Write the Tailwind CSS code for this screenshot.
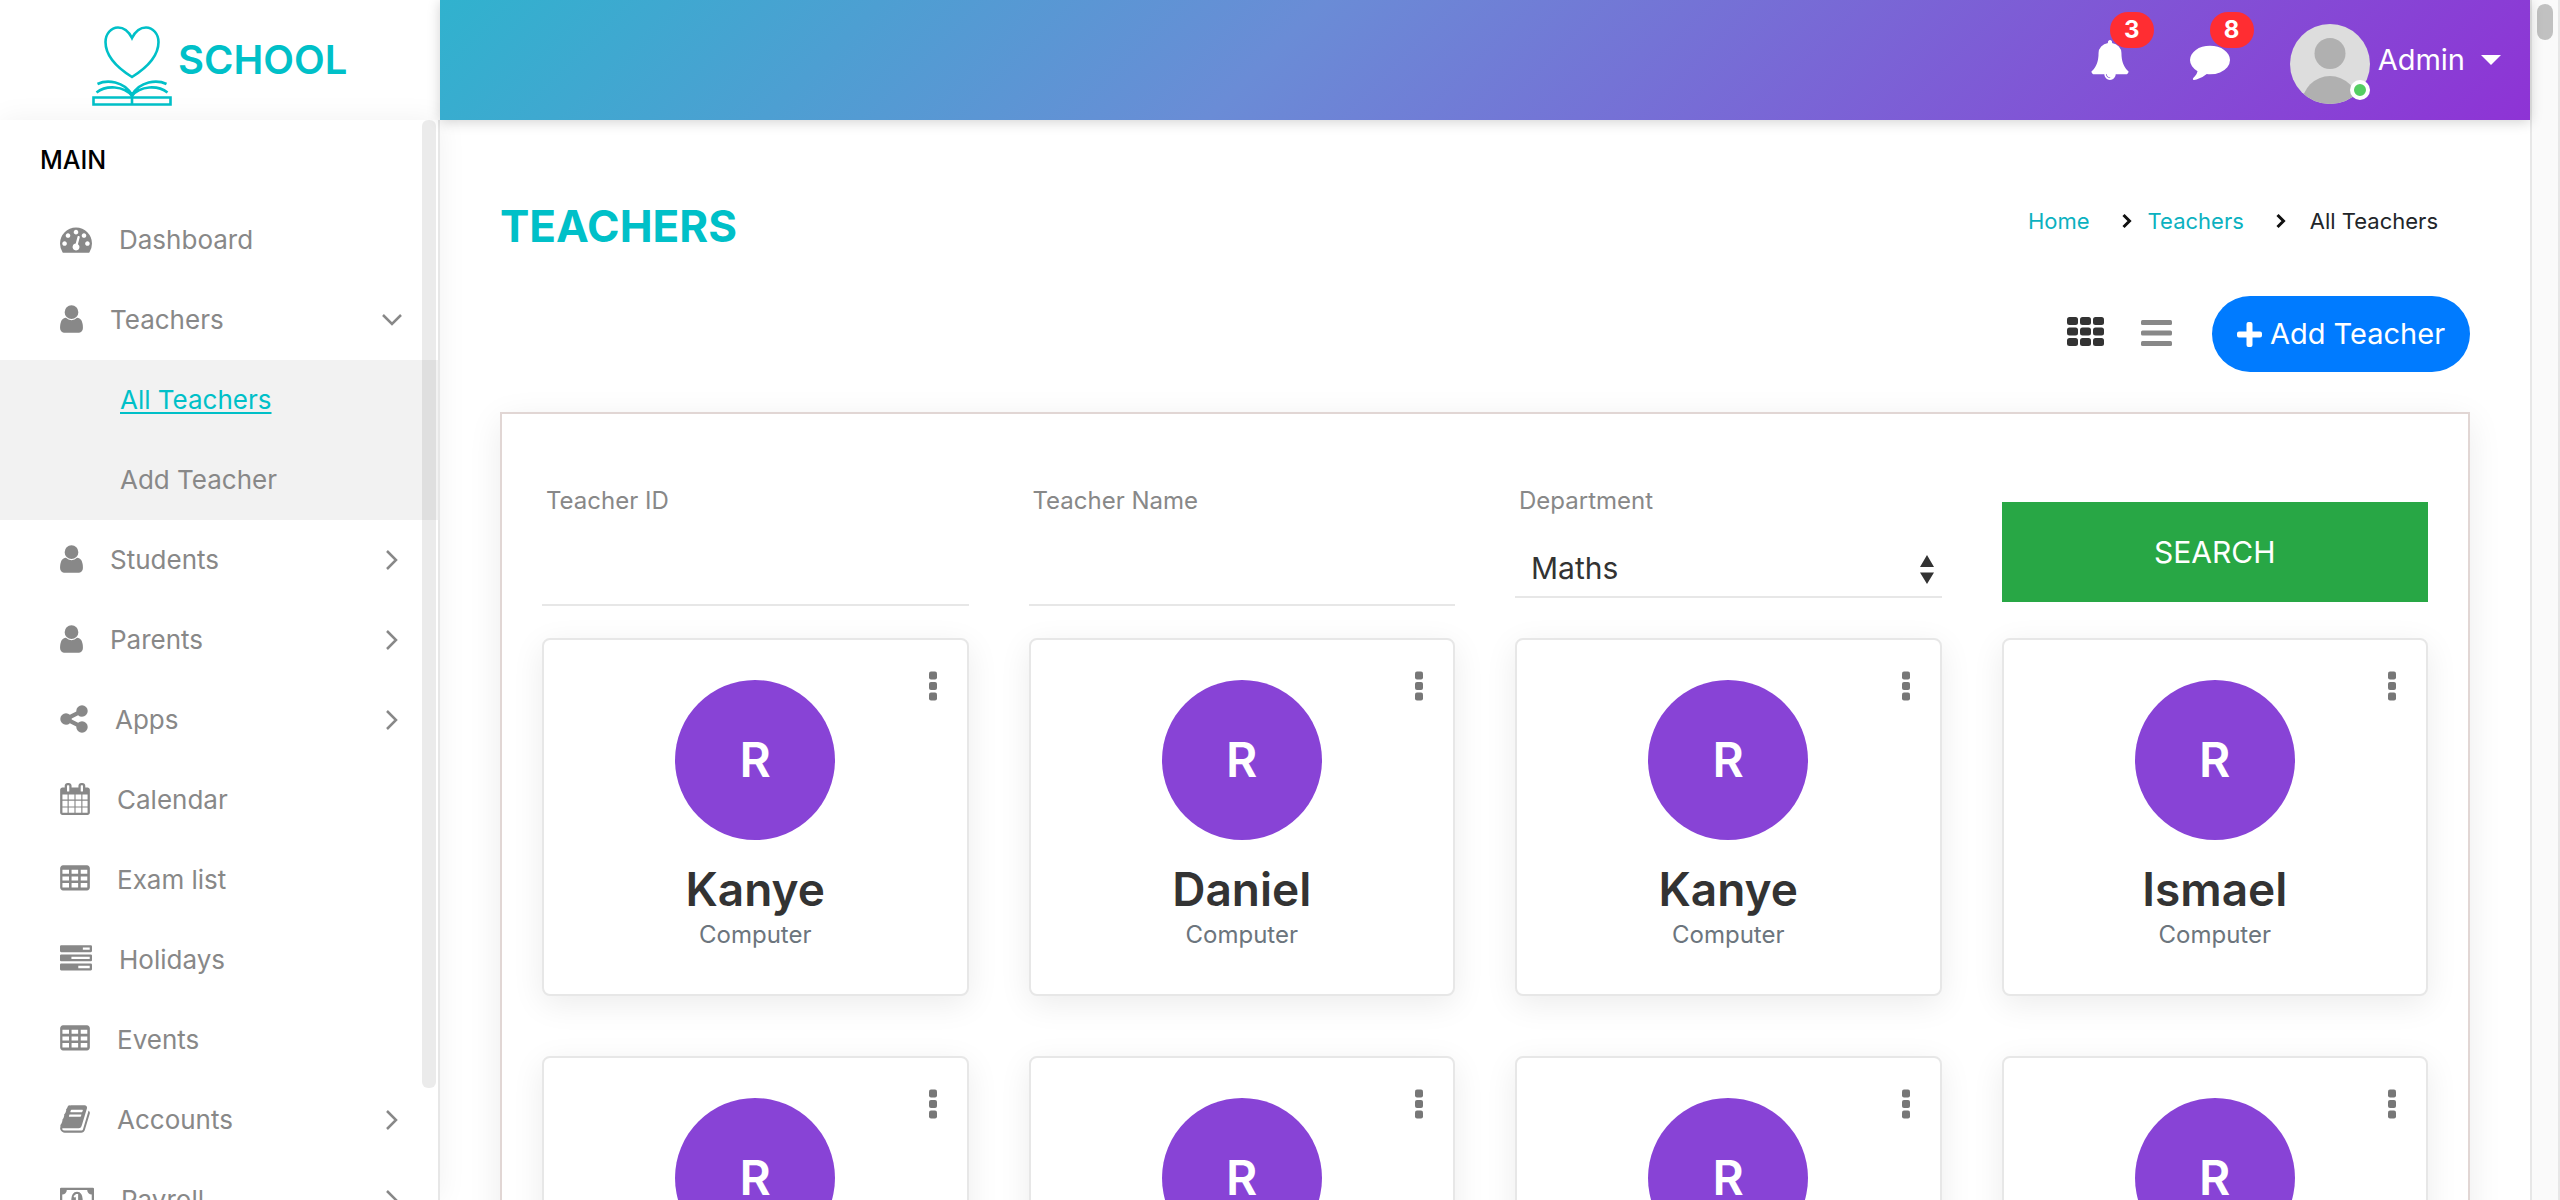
<!DOCTYPE html>
<html lang="en">
<head>
<meta charset="utf-8">
<meta name="viewport" content="width=device-width, initial-scale=1">
<title>All Teachers</title>
<script src="https://cdn.jsdelivr.net/npm/@tailwindcss/browser@4"></script>
</head>
<body class="flex h-screen overflow-hidden bg-white font-[Inter,sans-serif] text-[#333333]">

<!-- Icon sprite -->
<svg class="hidden" aria-hidden="true">
  <symbol id="i-dash" viewBox="0 0 1792 1792"><path d="M384 1152q0-53-37.5-90.5t-90.5-37.5-90.5 37.5-37.5 90.5 37.5 90.5 90.5 37.5 90.5-37.5 37.5-90.5zm192-448q0-53-37.5-90.5t-90.5-37.5-90.5 37.5-37.5 90.5 37.5 90.5 90.5 37.5 90.5-37.5 37.5-90.5zm428 481l101-382q6-26-7.5-48.5t-38.5-29.5-48 6.5-30 39.5l-101 382q-60 5-107 43.5t-63 98.5q-20 77 20 146t117 89 146-20 89-117q16-60-6-117t-72-91zm660-33q0-53-37.5-90.5t-90.5-37.5-90.5 37.5-37.5 90.5 37.5 90.5 90.5 37.5 90.5-37.5 37.5-90.5zm-640-640q0-53-37.5-90.5t-90.5-37.5-90.5 37.5-37.5 90.5 37.5 90.5 90.5 37.5 90.5-37.5 37.5-90.5zm448 192q0-53-37.5-90.5t-90.5-37.5-90.5 37.5-37.5 90.5 37.5 90.5 90.5 37.5 90.5-37.5 37.5-90.5zm320 448q0 261-141 483-19 29-54 29h-1402q-35 0-54-29-141-221-141-483 0-182 71-348t191-286 286-191 348-71 348 71 286 191 191 286 71 348z"/></symbol>
  <symbol id="i-user" viewBox="256 0 1280 1792"><path d="M1536 1399q0 109-62.5 187t-150.5 78h-854q-88 0-150.5-78t-62.5-187q0-85 8.5-160.5t31.5-152 58.5-131 94-89 134.5-34.5q131 128 313 128t313-128q76 0 134.5 34.5t94 89 58.5 131 31.5 152 8.5 160.5zm-256-887q0 159-112.5 271.5t-271.5 112.5-271.5-112.5-112.5-271.5 112.5-271.5 271.5-112.5 271.5 112.5 112.5 271.5z"/></symbol>
  <symbol id="i-share" viewBox="128 0 1536 1792"><path d="M1344 1024q133 0 226.5 93.5t93.5 226.5-93.5 226.5-226.5 93.5-226.5-93.5-93.5-226.5q0-12 2-34l-360-180q-92 86-218 86-133 0-226.5-93.5t-93.5-226.5 93.5-226.5 226.5-93.5q126 0 218 86l360-180q-2-22-2-34 0-133 93.5-226.5t226.5-93.5 226.5 93.5 93.5 226.5-93.5 226.5-226.5 93.5q-126 0-218-86l-360 180q2 22 2 34t-2 34l360 180q92-86 218-86z"/></symbol>
  <symbol id="i-cal" viewBox="64 0 1664 1792"><path d="M192 1664h288v-288h-288v288zm352 0h320v-288h-320v288zm-352-352h288v-320h-288v320zm352 0h320v-320h-320v320zm-352-384h288v-288h-288v288zm736 736h320v-288h-320v288zm-384-736h320v-288h-320v288zm768 736h288v-288h-288v288zm-384-352h320v-320h-320v320zm-352-864v-288q0-13-9.5-22.5t-22.5-9.5h-64q-13 0-22.5 9.5t-9.5 22.5v288q0 13 9.5 22.5t22.5 9.5h64q13 0 22.5-9.5t9.5-22.5zm736 864h288v-320h-288v320zm-384-384h320v-288h-320v288zm384 0h288v-288h-288v288zm32-480v-288q0-13-9.5-22.5t-22.5-9.5h-64q-13 0-22.5 9.5t-9.5 22.5v288q0 13 9.5 22.5t22.5 9.5h64q13 0 22.5-9.5t9.5-22.5zm384-64v1280q0 52-38 90t-90 38h-1408q-52 0-90-38t-38-90v-1280q0-52 38-90t90-38h128v-96q0-66 47-113t113-47h64q66 0 113 47t47 113v96h384v-96q0-66 47-113t113-47h64q66 0 113 47t47 113v96h128q52 0 90 38t38 90z"/></symbol>
  <symbol id="i-table" viewBox="64 0 1664 1792"><path fill-rule="evenodd" d="M224 128h1344q66 0 113 47t47 113v1088q0 66-47 113t-113 47h-1344q-66 0-113-47t-47-113v-1088q0-66 47-113t113-47zM192 384v224h368v-224zM704 384v224h368v-224zM1216 384v224h368v-224zM192 752v224h368v-224zM704 752v224h368v-224zM1216 752v224h368v-224zM192 1120v256h368v-256zM704 1120v256h368v-256zM1216 1120v256h368v-256z"/></symbol>
  <symbol id="i-tasks" viewBox="0 0 1792 1792"><path fill-rule="evenodd" d="M64 128h1664q64 0 64 64v256q0 64-64 64h-1664q-64 0-64-64v-256q0-64 64-64zM1280 256v128h384v-128zM64 640h1664q64 0 64 64v256q0 64-64 64h-1664q-64 0-64-64v-256q0-64 64-64zM640 768v128h1024v-128zM64 1152h1664q64 0 64 64v256q0 64-64 64h-1664q-64 0-64-64v-256q0-64 64-64zM1024 1280v128h640v-128z"/></symbol>
  <symbol id="i-book" viewBox="64 0 1664 1792"><path d="M1703 478q40 57 18 129l-275 906q-19 64-76.5 107.5t-122.5 43.5h-923q-77 0-148.5-53.5t-99.5-131.5q-24-67-2-127 0-4 3-27t4-37q1-8-3-21.5t-3-19.5q2-11 8-21t16.5-23.5 16.5-23.5q23-38 45-91.5t30-91.5q3-10 .5-30t-.5-28q3-11 17-28t17-23q21-36 42-92t25-90q1-9-2.5-32t.5-28q4-13 22-30.5t22-22.5q19-26 42.5-84.5t27.5-96.5q1-8-3-25.5t-2-26.5q2-8 9-18t18-23 17-21q8-12 16.5-30.5t15-35 16-36 19.5-32 26.5-23.5 36-11.5 47.5 5.5l-1 3q38-9 51-9h761q74 0 114 56t18 130l-274 906q-36 119-71.5 153.5t-128.5 34.5h-869q-27 0-38 15-11 16-1 43 24 70 144 70h923q29 0 56-15.5t35-41.5l300-987q7-22 5-57 38 15 59 43zm-1064 2q-4 13 2 22.5t20 9.5h608q13 0 25.5-9.5t16.5-22.5l21-64q4-13-2-22.5t-20-9.5h-608q-13 0-25.5 9.5t-16.5 22.5zm-83 256q-4 13 2 22.5t20 9.5h608q13 0 25.5-9.5t16.5-22.5l21-64q4-13-2-22.5t-20-9.5h-608q-13 0-25.5 9.5t-16.5 22.5z"/></symbol>
  <symbol id="i-money" viewBox="0 0 1920 1792"><path fill-rule="evenodd" d="M64 256h1792q64 0 64 64v1152q0 64-64 64h-1792q-64 0-64-64v-1152q0-64 64-64zM384 384q0 106-75 181t-181 75v512q106 0 181 75t75 181h1152q0-106 75-181t181-75v-512q-106 0-181-75t-75-181zM960 480q160 0 240 128t80 288-80 288-240 128-240-128-80-288 80-288 240-128zM768 1152h384v-96h-128v-448h-114l-148 137 77 80q42-37 55-57h2v288h-128z"/></symbol>
  <symbol id="i-right" viewBox="0 0 20 24"><path d="M5 3l9 9-9 9" fill="none" stroke="currentColor" stroke-width="2.5"/></symbol>
  <symbol id="i-down" viewBox="0 0 20 24"><path d="M1 7l9 9 9-9" fill="none" stroke="currentColor" stroke-width="2.5"/></symbol>
</svg>

<!-- Left column -->
<aside class="flex w-[440px] shrink-0 flex-col">
  <a href="#" class="flex h-[120px] shrink-0 items-center gap-[6px] pl-[92px] text-[#00c0c8]">
    <svg class="mt-3 h-20 w-20" viewBox="0 0 80 80" fill="none" stroke="currentColor" stroke-width="2.6" aria-hidden="true">
      <path d="M40 12C36 4 31 1.500 26 1.500 19 1.500 13.500 8 13.500 16 13.500 30 24 41 40 51 56 41 66.500 30 66.500 16 66.500 8 61 1.500 54 1.500 49 1.500 44 4 40 12Z"/>
      <path d="M5.500 58C15 53.500 32 55 40 69 48 55 65 53.500 74.500 58M4.500 66.500C14 59 32 59.500 40 70 48 59.500 66 59 75.500 66.500"/>
      <path d="M1.500 71.500h77v7h-77zM40 66v12"/>
    </svg>
    <span class="text-[40px] font-semibold leading-[48px]">SCHOOL</span>
  </a>
  <nav class="relative z-10 min-h-0 flex-1 border-r-2 border-[#e7e7e7] bg-white shadow-[0_0_28px_rgba(0,0,0,0.06)]">
    <div class="h-full overflow-hidden text-[26px] leading-[80px] text-[#888888]">
      <h2 class="pl-10 text-[25px] font-medium text-black">MAIN</h2>
      <ul>
        <li><a href="#" class="flex h-20 items-center gap-[27px] pl-[60px]"><svg class="mb-0.5 h-8 w-8 fill-current"><use href="#i-dash"/></svg>Dashboard</a></li>
        <li>
          <a href="#" class="flex h-20 items-center gap-[27px] pl-[60px] pr-9"><svg class="mb-0.5 h-8 w-[23px] fill-current"><use href="#i-user"/></svg>Teachers<svg class="ml-auto h-6 w-5"><use href="#i-down"/></svg></a>
          <ul class="bg-[#f2f2f2]">
            <li><a href="#" class="flex h-20 items-center pl-[120px] text-[#00c0c8] underline decoration-2 underline-offset-3">All Teachers</a></li>
            <li><a href="#" class="flex h-20 items-center pl-[120px]">Add Teacher</a></li>
          </ul>
        </li>
        <li><a href="#" class="flex h-20 items-center gap-[27px] pl-[60px] pr-9"><svg class="mb-0.5 h-8 w-[23px] fill-current"><use href="#i-user"/></svg>Students<svg class="ml-auto h-6 w-5"><use href="#i-right"/></svg></a></li>
        <li><a href="#" class="flex h-20 items-center gap-[27px] pl-[60px] pr-9"><svg class="mb-0.5 h-8 w-[23px] fill-current"><use href="#i-user"/></svg>Parents<svg class="ml-auto h-6 w-5"><use href="#i-right"/></svg></a></li>
        <li><a href="#" class="flex h-20 items-center gap-[27px] pl-[60px] pr-9"><svg class="mb-0.5 h-8 w-[28px] fill-current"><use href="#i-share"/></svg>Apps<svg class="ml-auto h-6 w-5"><use href="#i-right"/></svg></a></li>
        <li><a href="#" class="flex h-20 items-center gap-[27px] pl-[60px]"><svg class="mb-0.5 h-8 w-[30px] fill-current"><use href="#i-cal"/></svg>Calendar</a></li>
        <li><a href="#" class="flex h-20 items-center gap-[27px] pl-[60px]"><svg class="mb-0.5 h-8 w-[30px] fill-current"><use href="#i-table"/></svg>Exam list</a></li>
        <li><a href="#" class="flex h-20 items-center gap-[27px] pl-[60px]"><svg class="mb-0.5 h-8 w-8 fill-current"><use href="#i-tasks"/></svg>Holidays</a></li>
        <li><a href="#" class="flex h-20 items-center gap-[27px] pl-[60px]"><svg class="mb-0.5 h-8 w-[30px] fill-current"><use href="#i-table"/></svg>Events</a></li>
        <li><a href="#" class="flex h-20 items-center gap-[27px] pl-[60px] pr-9"><svg class="mb-0.5 h-8 w-[30px] fill-current"><use href="#i-book"/></svg>Accounts<svg class="ml-auto h-6 w-5"><use href="#i-right"/></svg></a></li>
        <li><a href="#" class="flex h-20 items-center gap-[27px] pl-[60px] pr-9"><svg class="mb-0.5 h-8 w-[34px] fill-current"><use href="#i-money"/></svg>Payroll<svg class="ml-auto h-6 w-5"><use href="#i-right"/></svg></a></li>
      </ul>
    </div>
    <!-- Sidebar scroll thumb -->
    <div class="absolute bottom-28 right-[2px] top-0 w-[14px] rounded-[6px] bg-black/8"></div>
  </nav>
</aside>

<!-- Right column -->
<div class="flex min-w-0 flex-1 flex-col">
  <header class="relative z-20 flex h-[120px] shrink-0 items-center justify-end bg-linear-[135deg,#30b2ce_0%,#6a8cd6_40%,#8e33d5_100%] pr-[29px] text-white shadow-[0_2px_12px_rgba(0,0,0,0.18)]">
    <button class="relative mr-[60px] h-10 w-10" aria-label="Notifications">
      <svg class="h-10 w-10 fill-current" viewBox="0 0 1792 1792"><path d="M912 1696q0-16-16-16-59 0-101.500-42.500t-42.500-101.500q0-16-16-16t-16 16q0 73 51.500 124.500t124.500 51.500q16 0 16-16zm816-288q0 52-38 90t-90 38h-448q0 106-75 181t-181 75-181-75-75-181h-448q-52 0-90-38t-38-90q50-42 91-88t85-119.500 74.500-158.500 50-206 19.500-260q0-152 117-282.500t307-158.500q-8-19-8-39 0-40 28-68t68-28 68 28 28 68q0 20-8 39 190 28 307 158.500t117 282.500q0 139 19.500 260t50 206 74.500 158.500 85 119.500 91 88z"/></svg>
      <span class="absolute -top-7 left-5 flex h-9 w-11 items-center justify-center rounded-full bg-[#ff2d32] text-[24px] font-bold leading-9">3</span>
    </button>
    <button class="relative mr-[60px] h-10 w-10" aria-label="Messages">
      <svg class="h-10 w-10 fill-current" viewBox="0 0 1792 1792"><path d="M1792 896q0 174-120 321.500t-326 233-450 85.500q-70 0-145-8-198 175-460 242-49 14-114 22-17 2-30.500-9t-17.500-29v-1q-3-4-.5-12t2-10 4.500-9.500l6-9 7-8.500 8-9q7-8 31-34.500t34.500-38 31-39.500 32.500-51 27-59 26-76q-157-89-247.500-220t-90.500-281q0-130 71-248.500t191-204.500 286-136.500 348-50.500 348 50.500 286 136.500 191 204.500 71 248.500z"/></svg>
      <span class="absolute -top-7 left-5 flex h-9 w-11 items-center justify-center rounded-full bg-[#ff2d32] text-[24px] font-bold leading-9">8</span>
    </button>
    <button class="flex items-center text-[29px]">
      <span class="relative mt-2 block h-20 w-20">
        <svg class="h-20 w-20" viewBox="0 0 80 80" aria-hidden="true">
          <clipPath id="av"><circle cx="40" cy="40" r="40"/></clipPath>
          <g clip-path="url(#av)"><path fill="#dddddd" d="M0 0h80v80H0z"/><circle cx="40" cy="29.500" r="15.500" fill="#b0b0b0"/><circle cx="40" cy="80" r="28" fill="#b0b0b0"/></g>
        </svg>
        <span class="absolute bottom-1 right-0 h-5 w-5 rounded-full border-4 border-white bg-[#55ce63]"></span>
      </span>
      <span class="pl-2">Admin</span>
      <svg class="ml-4 h-[10px] w-5 fill-current" viewBox="0 0 20 10" aria-hidden="true"><path d="M0 0h20L10 10z"/></svg>
    </button>
  </header>

  <main class="min-h-0 flex-1 overflow-hidden px-[60px] pt-[72px]">
    <div class="mb-9 flex h-[68px] items-start justify-between">
      <h1 class="text-[44px] font-bold leading-[68px] text-[#00c0c8]">TEACHERS</h1>
      <nav aria-label="Breadcrumb" class="pr-8">
        <ol class="flex items-center text-[22px] leading-[58px] text-[#212529]">
          <li><a href="#" class="text-[#0bb1c0]">Home</a></li>
          <li class="flex items-center"><svg class="ml-8 mr-4 h-4 w-[10px]" viewBox="0 0 10 16" fill="none" stroke="#111" stroke-width="3"><path d="M1.500 2l6 6-6 6"/></svg><a href="#" class="text-[#0bb1c0]">Teachers</a></li>
          <li class="flex items-center"><svg class="ml-8 mr-6 h-4 w-[10px]" viewBox="0 0 10 16" fill="none" stroke="#111" stroke-width="3"><path d="M1.500 2l6 6-6 6"/></svg>All Teachers</li>
        </ol>
      </nav>
    </div>

    <div class="mb-10 flex h-[76px] items-center justify-end">
      <button aria-label="Grid view"><svg class="mb-1 h-[30px] w-[37px] fill-[#333333]" viewBox="0 0 37 30"><rect width="11" height="8" y="0" rx="2.500"/><rect width="11" height="8" x="13" rx="2.500"/><rect width="11" height="8" x="26" rx="2.500"/><rect width="11" height="8" y="10.500" rx="2.500"/><rect width="11" height="8" x="13" y="10.500" rx="2.500"/><rect width="11" height="8" x="26" y="10.500" rx="2.500"/><rect width="11" height="8" y="21" rx="2.500"/><rect width="11" height="8" x="13" y="21" rx="2.500"/><rect width="11" height="8" x="26" y="21" rx="2.500"/></svg></button>
      <button aria-label="List view" class="ml-[37px] mr-10"><svg class="mb-0.5 h-[26px] w-[31px] fill-[#888888]" viewBox="0 0 31 26"><rect width="31" height="5" rx="1.500"/><rect width="31" height="5" y="10.500" rx="1.500"/><rect width="31" height="5" y="21" rx="1.500"/></svg></button>
      <a href="#" class="flex h-[76px] w-[258px] items-center justify-center gap-2 rounded-full bg-[#007bff] text-[29px] text-white">
        <svg class="h-[25px] w-[25px] fill-current" viewBox="0 0 25 25" aria-hidden="true"><path d="M11.500 0h2q2 0 2 2v7.500h7.500q2 0 2 2v2q0 2-2 2h-7.500v7.500q0 2-2 2h-2q-2 0-2-2v-7.500h-7.500q-2 0-2-2v-2q0-2 2-2h7.500v-7.500q0-2 2-2z"/></svg>Add Teacher
      </a>
    </div>

    <section class="border-2 border-[#e1d6d4] px-10 pb-10 pt-[68px] shadow-[0_8px_32px_rgba(0,0,0,0.08)]">
      <form class="mb-8 grid grid-cols-4 gap-[60px]">
        <div class="flex flex-col">
          <label for="tid" class="pl-1 text-[24px] leading-[38px] text-[#888888]">Teacher ID</label>
          <input id="tid" type="text" class="h-[86px] border-b-2 border-[#e7e7e7] px-4 text-[30px] outline-none">
        </div>
        <div class="flex flex-col">
          <label for="tname" class="pl-1 text-[24px] leading-[38px] text-[#888888]">Teacher Name</label>
          <input id="tname" type="text" class="h-[86px] border-b-2 border-[#e7e7e7] px-4 text-[30px] outline-none">
        </div>
        <div class="flex flex-col">
          <label for="dept" class="pl-1 text-[24px] leading-[38px] text-[#888888]">Department</label>
          <div class="relative mt-5">
            <select id="dept" class="h-[58px] w-full appearance-none border-b-2 border-[#e7e7e7] bg-transparent pl-4 text-[30px] leading-[40px] text-[#333333] outline-none"><option>Maths</option><option>Computer</option></select>
            <svg class="pointer-events-none absolute right-2 top-[14px] h-[30px] w-[14px] fill-[#333333]" viewBox="0 0 14 30"><path d="M0 13L7 1l7 12zM0 18.500h14L7 30z"/></svg>
          </div>
        </div>
        <button type="button" class="mt-5 h-[100px] bg-[#28a745] text-[30px] text-white">SEARCH</button>
      </form>

      <div id="cards" class="grid grid-cols-4 gap-[60px]"></div>
    </section>
  </main>
</div>

<!-- Window scroll track -->
<div class="flex w-[30px] shrink-0 justify-center border-x-2 border-[#e7e7e7] bg-[#fafafa] pt-1">
  <div class="h-9 w-4 rounded-full bg-[#c1c1c1]"></div>
</div>

<script>
const names = ['Kanye', 'Daniel', 'Kanye', 'Ismael', 'Kanye', 'Daniel', 'Kanye', 'Ismael'];
document.getElementById('cards').innerHTML = names.map(n => `
  <article class="relative flex flex-col items-center rounded-lg border-2 border-[#e7e7e7] bg-white pb-[42px] pt-10 shadow-[0_8px_32px_rgba(0,0,0,0.08)]">
    <button class="absolute right-[30px] top-[31px]" aria-label="More options"><svg class="h-[30px] w-2 fill-[#777777]" viewBox="0 0 8 30"><rect width="8" height="8" y="0.500" rx="2"/><rect width="8" height="8" y="11" rx="2"/><rect width="8" height="8" y="21.500" rx="2"/></svg></button>
    <div class="flex h-40 w-40 items-center justify-center rounded-full bg-[#8843d6] text-[48px] font-semibold text-white">R</div>
    <h3 class="mt-5 text-[46px] font-semibold leading-[58px]">${n}</h3>
    <p class="text-[24px] leading-[34px] text-[#6c757d]">Computer</p>
  </article>`).join('');
</script>
</body>
</html>
